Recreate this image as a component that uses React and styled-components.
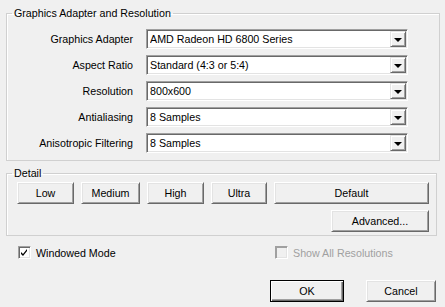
import React, { useState } from 'react';
import styled, { createGlobalStyle } from 'styled-components';

const GlobalStyle = createGlobalStyle`
  html, body {
    margin: 0;
    padding: 0;
    background: #f0f0f0;
  }
  body {
    font-family: "Liberation Sans", Arial, sans-serif;
    font-size: 10.7px;
    color: #000;
  }
`;

const Window = styled.div`
  width: 445px;
  height: 307px;
  box-sizing: border-box;
  padding-top: 7px;
  background: #f0f0f0;
  display: flex;
  flex-direction: column;
  overflow: hidden;
`;

const Group = styled.fieldset`
  margin: ${(p) => p.$margin || '0 5px 0 6px'};
  padding: 0;
  border: 1px solid #d0d0d0;
  box-shadow: inset 1px 1px 0 #fff;
  min-width: 0;
`;

const Legend = styled.legend`
  margin-left: 5px;
  padding: 0 2px;
  line-height: 13px;
  font-size: 10.7px;
`;

const Rows = styled.div`
  display: grid;
  grid-template-columns: 126px 262px;
  grid-auto-rows: 20px;
  column-gap: 13px;
  row-gap: 6px;
  padding: 9px 0 7px 0;
`;

const Label = styled.label`
  justify-self: end;
  align-self: center;
  white-space: nowrap;
`;

const SelectBox = styled.div`
  box-sizing: border-box;
  height: 20px;
  background: #fff;
  border-style: solid;
  border-width: 1px;
  border-color: #a0a0a0 #fff #fff #a0a0a0;
  box-shadow: inset 1px 1px 0 #696969, inset -1px -1px 0 #e3e3e3;
  display: flex;
  align-items: center;
  padding: 0 1px 0 3px;
`;

const SelectText = styled.span`
  flex: 1;
  white-space: nowrap;
  overflow: hidden;
`;

const Arrow = styled.span`
  box-sizing: border-box;
  width: 16px;
  height: 16px;
  background: #f0f0f0;
  border-style: solid;
  border-width: 1px;
  border-color: #e3e3e3 #696969 #696969 #e3e3e3;
  box-shadow: inset 1px 1px 0 #fff, inset -1px -1px 0 #a0a0a0;
  display: flex;
  align-items: center;
  justify-content: center;

  &::after {
    content: '';
    width: 0;
    height: 0;
    border-left: 4px solid transparent;
    border-right: 4px solid transparent;
    border-top: 4px solid #000;
    margin-top: 1px;
  }
`;

const Button = styled.button`
  box-sizing: border-box;
  width: ${(p) => p.$w}px;
  height: 22px;
  padding: 0;
  font: inherit;
  color: #000;
  background: #f0f0f0;
  border-style: solid;
  border-width: 1px;
  border-color: ${(p) =>
    p.$default ? '#000' : '#fff #696969 #696969 #fff'};
  box-shadow: ${(p) =>
    p.$default
      ? 'inset 1px 1px 0 #fff, inset -1px -1px 0 #696969, inset -2px -2px 0 #a0a0a0'
      : 'inset 1px 1px 0 #e3e3e3, inset -1px -1px 0 #a0a0a0'};
  cursor: default;
`;

const DetailBody = styled.div`
  display: flex;
  flex-direction: column;
  gap: 6px;
  padding: 2px 7px 3px 10px;
`;

const ButtonRow = styled.div`
  display: flex;
  gap: 7px;
  justify-content: ${(p) => (p.$end ? 'flex-end' : 'flex-start')};
`;

const OptionRow = styled.div`
  display: flex;
  margin-top: 10px;
  padding-left: 18px;
  height: 13px;
`;

const Check = styled.label`
  display: flex;
  align-items: center;
  gap: 5px;
  width: ${(p) => (p.$w ? `${p.$w}px` : 'auto')};
  color: ${(p) => (p.$disabled ? '#a0a0a0' : '#000')};
`;

const Box = styled.span`
  box-sizing: border-box;
  width: 13px;
  height: 13px;
  background: ${(p) => (p.$disabled ? '#f0f0f0' : '#fff')};
  border-style: solid;
  border-width: 1px;
  border-color: #a0a0a0 #fff #fff #a0a0a0;
  box-shadow: inset 1px 1px 0 ${(p) => (p.$disabled ? '#a0a0a0' : '#696969')},
    inset -1px -1px 0 #e3e3e3;
  display: flex;
  align-items: center;
  justify-content: center;
`;

const Footer = styled.div`
  display: flex;
  justify-content: flex-end;
  gap: 22px;
  margin-top: 21px;
  padding-right: 9px;
`;

const Select = ({ value }) => (
  <SelectBox>
    <SelectText>{value}</SelectText>
    <Arrow />
  </SelectBox>
);

const CheckMark = () => (
  <svg width="7" height="7" viewBox="0 0 7 7">
    <path d="M0 3 L2 5 L6 0 L6 2 L2 7 L0 5 Z" fill="#000" />
  </svg>
);

const settings = [
  ['Graphics Adapter', 'AMD Radeon HD 6800 Series'],
  ['Aspect Ratio', 'Standard (4:3 or 5:4)'],
  ['Resolution', '800x600'],
  ['Antialiasing', '8 Samples'],
  ['Anisotropic Filtering', '8 Samples'],
];

const presets = [
  ['Low', 57],
  ['Medium', 59],
  ['High', 57],
  ['Ultra', 56],
  ['Default', 155],
];

const App = () => {
  const [windowed] = useState(true);

  return (
    <Window>
      <GlobalStyle />
      <Group>
        <Legend>Graphics Adapter and Resolution</Legend>
        <Rows>
          {settings.map(([label, value]) => (
            <React.Fragment key={label}>
              <Label>{label}</Label>
              <Select value={value} />
            </React.Fragment>
          ))}
        </Rows>
      </Group>

      <Group $margin="6px 8px 0 6px">
        <Legend>Detail</Legend>
        <DetailBody>
          <ButtonRow>
            {presets.map(([name, w]) => (
              <Button key={name} $w={w}>
                {name}
              </Button>
            ))}
          </ButtonRow>
          <ButtonRow $end>
            <Button $w={98}>Advanced...</Button>
          </ButtonRow>
        </DetailBody>
      </Group>

      <OptionRow>
        <Check $w={257}>
          <Box>{windowed && <CheckMark />}</Box>
          Windowed Mode
        </Check>
        <Check $disabled>
          <Box $disabled />
          Show All Resolutions
        </Check>
      </OptionRow>

      <Footer>
        <Button $w={74} $default>
          OK
        </Button>
        <Button $w={70}>Cancel</Button>
      </Footer>
    </Window>
  );
};

export default App;
